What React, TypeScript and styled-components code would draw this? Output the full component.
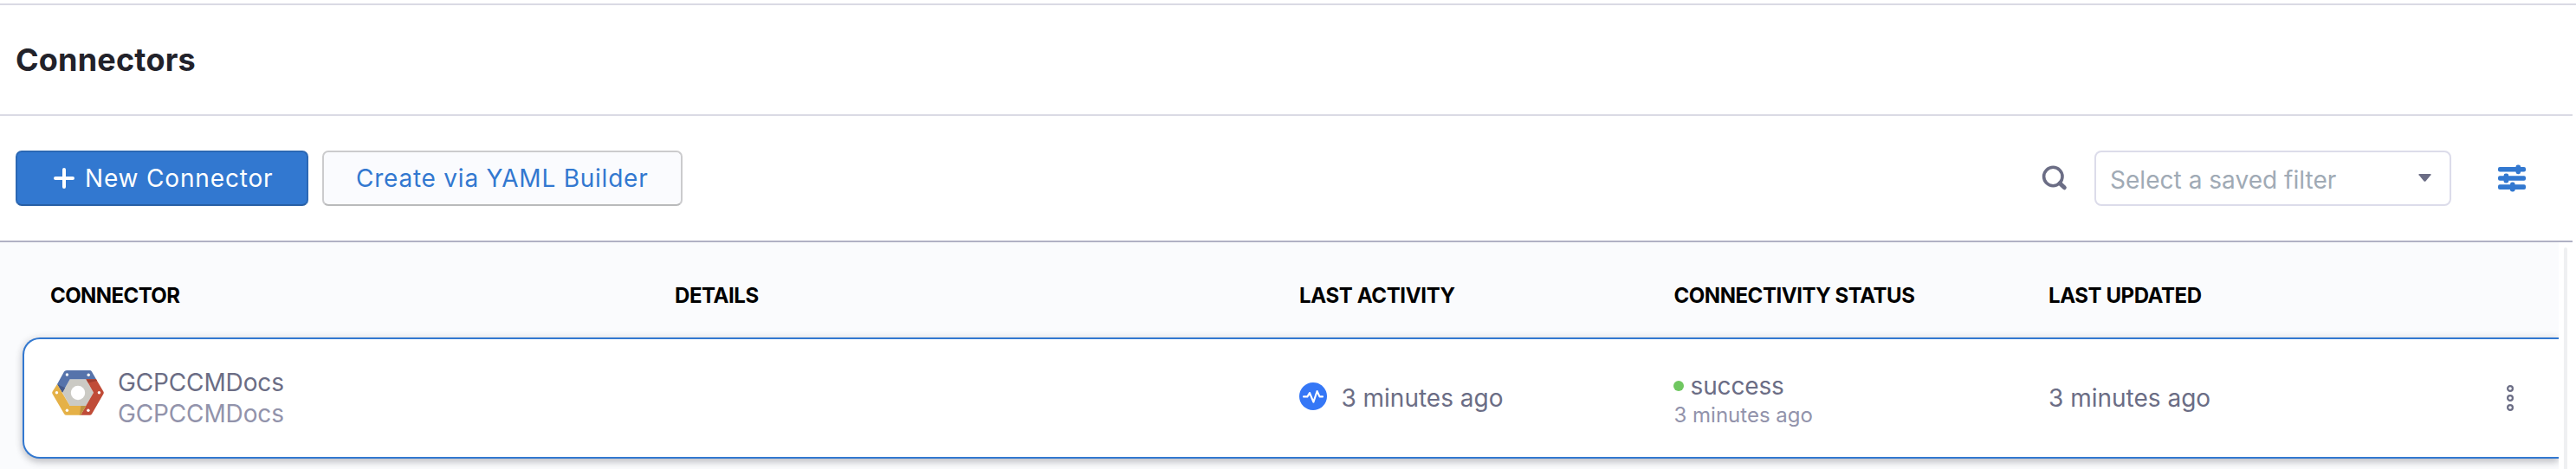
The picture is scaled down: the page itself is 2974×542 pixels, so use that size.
import React from "react";
import styled, { createGlobalStyle } from "styled-components";

const GlobalStyle = createGlobalStyle`
  * { box-sizing: border-box; }
  body {
    margin: 0;
    background: #fff;
    font-family: Inter, "Liberation Sans", sans-serif;
    -webkit-font-smoothing: antialiased;
  }
`;

const Page = styled.div`
  height: 542px;
  padding-top: 4px;
  overflow: hidden;
  background: #fff;
`;

const TopRule = styled.div`
  height: 2px;
  background: #dadae4;
`;

const Content = styled.div`
  width: 2970px;
`;

const TitleBar = styled.header`
  display: flex;
  align-items: center;
  height: 128px;
  padding-left: 18px;
  border-bottom: 2px solid #dadae4;
`;

const Title = styled.h1`
  margin: 0;
  font-size: 36px;
  font-weight: 700;
  line-height: 44px;
  letter-spacing: 0.2px;
  color: #22222a;
`;

const Toolbar = styled.div`
  display: flex;
  align-items: center;
  justify-content: space-between;
  height: 146px;
  padding: 0 54px 0 18px;
  border-bottom: 2px solid #b0b1c4;
`;

const ToolGroup = styled.div<{ $gap: number }>`
  display: flex;
  align-items: center;
  gap: ${(p) => p.$gap}px;
`;

const Button = styled.button<{ $primary?: boolean }>`
  display: flex;
  align-items: center;
  gap: 12px;
  height: 64px;
  width: ${(p) => (p.$primary ? 338 : 416)}px;
  padding: 0 0 0 ${(p) => (p.$primary ? 42 : 37)}px;
  border: 2px solid ${(p) => (p.$primary ? "#2b68b4" : "#cbcbcd")};
  border-bottom-color: ${(p) => (p.$primary ? "#285fa5" : "#b9babb")};
  border-radius: 7px;
  background: ${(p) => (p.$primary ? "#3278d0" : "#fafbfe")};
  color: ${(p) => (p.$primary ? "#fff" : "#3278d0")};
  font: 400 28px/36px Inter, "Liberation Sans", sans-serif;
  letter-spacing: ${(p) => (p.$primary ? 0.84 : 0.77)}px;
  white-space: nowrap;
`;

const SearchBox = styled.div`
  display: flex;
  margin-right: 31px;
`;

const FilterSelect = styled.div`
  display: flex;
  align-items: center;
  justify-content: space-between;
  width: 412px;
  height: 64px;
  margin-right: 54px;
  padding: 0 21px 0 16px;
  border: 2px solid #dcdcea;
  border-radius: 8px;
`;

const Placeholder = styled.span`
  padding-top: 3px;
  font-size: 28px;
  line-height: 36px;
  letter-spacing: 0.03px;
  color: #a0aab5;
`;

const CaretIcon = styled.svg`
  margin-bottom: 2px;
`;

const Body = styled.div`
  display: flex;
  height: 262px;
`;

const Table = styled.div`
  width: 2954px;
  padding-left: 26px;
  overflow: hidden;
  background: #fafbfd;
`;

const ScrollGutter = styled.div`
  display: flex;
  justify-content: center;
  width: 16px;
  padding-top: 6px;
`;

const ScrollTrack = styled.div`
  width: 4px;
  height: 100%;
  border-radius: 2px 2px 0 0;
  background: #eff0f2;
`;

const columns = "721px 721px 432.5px 432.5px 1fr";

const HeaderRow = styled.div`
  display: grid;
  grid-template-columns: ${columns};
  align-items: center;
  height: 110px;
  padding: 13px 0 0 32px;
`;

const HeaderCell = styled.div<{ $spacing: number }>`
  font-size: 24px;
  font-weight: 700;
  line-height: 30px;
  letter-spacing: ${(p) => p.$spacing}px;
  color: #000;
`;

const ConnectorRow = styled.div`
  display: grid;
  grid-template-columns: ${columns};
  align-items: center;
  height: 140px;
  padding-left: 30px;
  border: 2px solid #3278d0;
  border-right: 0;
  border-radius: 20px 0 0 20px;
  background: #fff;
  box-shadow: 0 0 10px rgba(40, 41, 61, 0.1), 0 4px 8px rgba(40, 41, 50, 0.24);
`;

const Cell = styled.div<{ $gap?: number }>`
  display: flex;
  align-items: center;
  gap: ${(p) => p.$gap ?? 0}px;
`;

const LastCell = styled(Cell)`
  justify-content: space-between;
  padding-right: 52px;
`;

const Stack = styled.div`
  display: flex;
  flex-direction: column;
`;

const StatusStack = styled(Stack)`
  padding-top: 3px;
`;

const StatusLine = styled.div`
  display: flex;
  align-items: center;
  gap: 8px;
  margin-left: -1px;
`;

const StatusDot = styled.span`
  width: 12px;
  height: 12px;
  border-radius: 50%;
  background: #6fc760;
`;

const Text = styled.span<{ $muted?: boolean; $small?: boolean; $spacing?: number }>`
  font-size: ${(p) => (p.$small ? 24 : 28)}px;
  line-height: ${(p) => (p.$small ? 31 : 36)}px;
  letter-spacing: ${(p) => p.$spacing ?? 0}px;
  color: ${(p) => (p.$muted ? "#9293ab" : "#6b6d85")};
`;

const GcpIcon = styled.svg`
  margin: 0 16px 12px 2px;
`;

const PulseIcon = styled.svg`
  margin-bottom: 4px;
`;

function PlusGlyph() {
  return (
    <svg width="24" height="24" viewBox="0 0 24 24" fill="none" stroke="#fff" strokeWidth="4" strokeLinecap="round">
      <path d="M12 2v20M2 12h20" />
    </svg>
  );
}

function SearchGlyph() {
  return (
    <svg width="30" height="30" viewBox="0 0 30 30" fill="none" stroke="#6b6d85">
      <circle cx="13.3" cy="13" r="10.7" strokeWidth="3.6" />
      <path d="M21 20.8l5.3 5" strokeWidth="5" strokeLinecap="round" />
    </svg>
  );
}

function SlidersGlyph() {
  return (
    <svg width="32" height="32" viewBox="0 0 32 32" fill="#3278d0">
      <rect x="0" y="3" width="32" height="5.6" rx="2" />
      <rect x="0" y="13.2" width="32" height="5.6" rx="2" />
      <rect x="0" y="23.3" width="32" height="5.6" rx="2" />
      <rect x="20.5" y="0.4" width="5.6" height="10.8" rx="2.4" />
      <rect x="6.6" y="10.4" width="5.6" height="11.2" rx="2.4" />
      <rect x="14" y="20.6" width="5.6" height="11" rx="2.4" />
    </svg>
  );
}

function GcpLogo() {
  return (
    <GcpIcon width="60" height="52" viewBox="0 0 60 52">
      <path d="M20.7 10.3H39.3L48 25.7L39.3 41H20.7L12 25.7Z" fill="#cbcac4" />
      <path d="M17 0H43.5Q45.2 0 46 1.4L51 10.3H20.7L12 25.7L6 15.9L14 1.6Q15 0 17 0Z" fill="#5673ab" />
      <path d="M6 15.9L15.2 20.2L12 25.7Z" fill="#45598a" />
      <path d="M39.3 10.3H51L59.4 24.4Q60.2 25.8 59.4 27.2L46 50.4Q45.2 51.8 43.6 51.8H33L48 25.7Z" fill="#c04c38" />
      <path d="M39.3 10.3H51L52 12L42 14.6Z" fill="#a03d2f" />
      <path d="M6 15.9L20.7 41H39.3L33 51.8H16.6Q15 51.8 14.2 50.4L0.6 27.2Q-0.2 25.8 0.6 24.4Z" fill="#e5b147" />
      <path d="M33.4 41H39.3L33 51.8H31.8Z" fill="#bd9443" />
      <g fill="#fff">
        <circle cx="30" cy="26" r="8.2" />
        <circle cx="17.4" cy="5" r="1.7" />
        <circle cx="42.2" cy="5.2" r="1.7" />
        <circle cx="5.5" cy="25.7" r="1.7" />
        <circle cx="54.4" cy="25.7" r="1.7" />
        <circle cx="17.4" cy="46.2" r="1.7" />
        <circle cx="41.9" cy="46.2" r="1.7" />
      </g>
    </GcpIcon>
  );
}

function PulseGlyph() {
  return (
    <PulseIcon width="32" height="32" viewBox="0 0 32 32" fill="none">
      <circle cx="16" cy="16" r="16" fill="#3577f6" />
      <path
        d="M5 16.4H9.4L12 12L16.4 22.6L20.6 10L23.5 16.4H27"
        stroke="#fff"
        strokeWidth="2.1"
        strokeLinecap="round"
        strokeLinejoin="round"
      />
    </PulseIcon>
  );
}

function MoreGlyph() {
  return (
    <svg width="8" height="30" viewBox="0 0 8 30" fill="none" stroke="#6b6d85" strokeWidth="2.2">
      <circle cx="4" cy="4" r="2.9" />
      <circle cx="4" cy="15" r="2.9" />
      <circle cx="4" cy="26" r="2.9" />
    </svg>
  );
}

const headers: [string, number][] = [
  ["CONNECTOR", -0.58],
  ["DETAILS", -0.42],
  ["LAST ACTIVITY", -0.36],
  ["CONNECTIVITY STATUS", -0.46],
  ["LAST UPDATED", -0.42],
];

export default function App() {
  return (
    <Page>
      <GlobalStyle />
      <TopRule />
      <Content>
        <TitleBar>
          <Title>Connectors</Title>
        </TitleBar>
        <Toolbar>
          <ToolGroup $gap={16}>
            <Button $primary>
              <PlusGlyph />
              <span>New Connector</span>
            </Button>
            <Button>Create via YAML Builder</Button>
          </ToolGroup>
          <ToolGroup $gap={0}>
            <SearchBox>
              <SearchGlyph />
            </SearchBox>
            <FilterSelect>
              <Placeholder>Select a saved filter</Placeholder>
              <CaretIcon width="15" height="9" viewBox="0 0 15 9">
                <path d="M1 0H14Q15 .2 14.4 1.2L8.4 8.4Q7.5 9.2 6.6 8.4L.6 1.2Q0 .2 1 0Z" fill="#6b6d85" />
              </CaretIcon>
            </FilterSelect>
            <SlidersGlyph />
          </ToolGroup>
        </Toolbar>
        <Body>
          <Table>
            <HeaderRow>
              {headers.map(([label, spacing]) => (
                <HeaderCell key={label} $spacing={spacing}>
                  {label}
                </HeaderCell>
              ))}
            </HeaderRow>
            <ConnectorRow>
              <Cell>
                <GcpLogo />
                <Stack>
                  <Text $spacing={-0.14}>GCPCCMDocs</Text>
                  <Text $muted $spacing={-0.14}>
                    GCPCCMDocs
                  </Text>
                </Stack>
              </Cell>
              <Cell />
              <Cell $gap={16.4}>
                <PulseGlyph />
                <Text>3 minutes ago</Text>
              </Cell>
              <StatusStack>
                <StatusLine>
                  <StatusDot />
                  <Text $spacing={-0.14}>success</Text>
                </StatusLine>
                <Text $muted $small>
                  3 minutes ago
                </Text>
              </StatusStack>
              <LastCell>
                <Text>3 minutes ago</Text>
                <MoreGlyph />
              </LastCell>
            </ConnectorRow>
          </Table>
          <ScrollGutter>
            <ScrollTrack />
          </ScrollGutter>
        </Body>
      </Content>
    </Page>
  );
}
